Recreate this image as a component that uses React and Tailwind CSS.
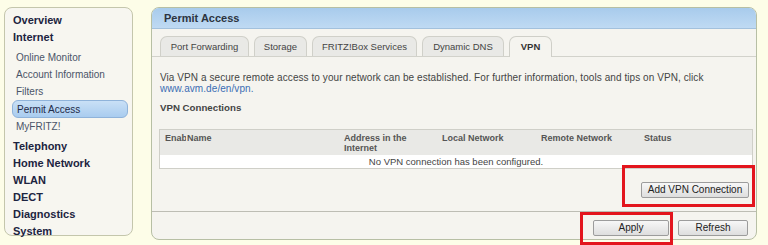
import React from "react";

const menu = [
  { label: "Overview", top: true },
  { label: "Internet", top: true },
];

const subMenu = [
  { label: "Online Monitor" },
  { label: "Account Information" },
  { label: "Filters" },
  { label: "Permit Access", active: true },
  { label: "MyFRITZ!" },
];

const lowerMenu = ["Telephony", "Home Network", "WLAN", "DECT", "Diagnostics", "System"];

const tabs = [
  { label: "Port Forwarding", w: "w-[89px]" },
  { label: "Storage", w: "w-[53px]" },
  { label: "FRITZ!Box Services", w: "w-[105px]" },
  { label: "Dynamic DNS", w: "w-[82px]" },
  { label: "VPN", w: "w-[43px]", active: true },
];

const Button = ({ children, className }) => (
  <button
    className={`h-[16px] rounded-[2px] border border-[#9c9c9c] bg-gradient-to-b from-[#f7f7f7] to-[#dedede] text-[10px] leading-[14px] text-[#222] ${className}`}
  >
    {children}
  </button>
);

const App = () => {
  return (
    <div className="relative w-[768px] h-[245px] overflow-hidden bg-[#fdfde8] flex items-start pl-[4px] pt-[7px] gap-[18px] font-['Liberation_Sans',Arial,sans-serif]">
      {/* sidebar */}
      <div className="w-[129px] h-[229px] shrink-0 rounded-[8px] border border-[#c4c6ac] bg-[#f7f6f0] pl-[7px] pr-[4px] pt-[3.5px]">
        {menu.map((m) => (
          <div key={m.label} className="h-[17px] leading-[17px] pl-[1px] text-[11px] font-bold text-[#1c2440]">
            {m.label}
          </div>
        ))}
        <div className="mt-[3px]">
          {subMenu.map((m) =>
            m.active ? (
              <div
                key={m.label}
                className="h-[18px] leading-[17px] pl-[4px] text-[10px] text-[#1f2b48] rounded-[6px] border border-[#8fb3da] bg-gradient-to-b from-[#c9e0f6] to-[#a9ccef]"
              >
                {m.label}
              </div>
            ) : (
              <div key={m.label} className="h-[17px] leading-[17px] pl-[4px] text-[10px] text-[#4a5468]">
                {m.label}
              </div>
            )
          )}
        </div>
        <div className="mt-[3px]">
          {lowerMenu.map((l) => (
            <div key={l} className="h-[17px] leading-[17px] pl-[1px] text-[11px] font-bold text-[#1c2440] whitespace-nowrap">
              {l}
            </div>
          ))}
        </div>
      </div>

      {/* main panel */}
      <div className="w-[606px] h-[233px] shrink-0 rounded-[8px] border border-[#b7bfa4] bg-[#f5f4ef] overflow-hidden flex flex-col">
        <div className="h-[21px] shrink-0 bg-gradient-to-b from-[#a8cbec] to-[#bfdaf3] border-b border-[#a3c1dd] pl-[12px] text-[11px] leading-[21px] font-bold text-[#2c3440]">
          Permit Access
        </div>

        <div className="mt-[7px] flex items-end gap-[5px] pl-[8px] border-b border-[#d2d2cb] h-[21px]">
          {tabs.map((t) =>
            t.active ? (
              <div
                key={t.label}
                className={`${t.w} h-[21px] -mb-[1px] rounded-t-[7px] border border-b-0 border-[#cfcfc8] bg-[#f5f4ef] text-center text-[9.5px] leading-[19px] font-bold text-[#333]`}
              >
                {t.label}
              </div>
            ) : (
              <div
                key={t.label}
                className={`${t.w} h-[20px] rounded-t-[7px] border border-b-0 border-[#d0d0c9] bg-[#e9e9e6] text-center text-[9.5px] leading-[19px] text-[#444]`}
              >
                {t.label}
              </div>
            )
          )}
        </div>

        <div className="pl-[8px] mt-[15px] text-[10px] tracking-[0.07px] leading-[11px] text-[#444]">
          <p>
            Via VPN a secure remote access to your network can be established. For further information, tools and tips on VPN, click
          </p>
          <p className="text-[#3b6db4]">www.avm.de/en/vpn.</p>
          <p className="mt-[8px] font-bold text-[9.7px] tracking-normal text-[#444]">VPN Connections</p>
        </div>

        <div className="ml-[7px] mt-[16px] w-[594px] border border-[#cfcfc8] bg-white">
          <div className="h-[25px] bg-[#e9e9e6] grid grid-cols-[22px_157px_98px_99px_103px_1fr] pl-[5px] pt-[3px] text-[9px] leading-[10px] font-bold text-[#555]">
            <div className="w-[21px] overflow-hidden whitespace-nowrap">Enable</div>
            <div>Name</div>
            <div className="pr-[22px]">Address in the Internet</div>
            <div>Local Network</div>
            <div>Remote Network</div>
            <div>Status</div>
          </div>
          <div className="h-[13px] text-center text-[9.5px] leading-[13px] text-[#444]">
            No VPN connection has been configured.
          </div>
        </div>

        <div className="mt-[13px] flex justify-end pr-[7px]">
          <Button className="w-[108px]">Add VPN Connection</Button>
        </div>

        <div className="mt-[13px] border-t border-[#bdbdb4] flex-1 flex justify-end items-start gap-[9px] pr-[8px] pt-[8px]">
          <Button className="w-[76px]">Apply</Button>
          <Button className="w-[70px]">Refresh</Button>
        </div>
      </div>

      {/* annotation frames */}
      <div className="absolute left-[622px] top-[165px] w-[133px] h-[42px] border-[3px] border-[#e3151d]" />
      <div className="absolute left-[580px] top-[212px] w-[93px] h-[33px] border-[3px] border-[#e3151d]" />
    </div>
  );
};

export default App;
